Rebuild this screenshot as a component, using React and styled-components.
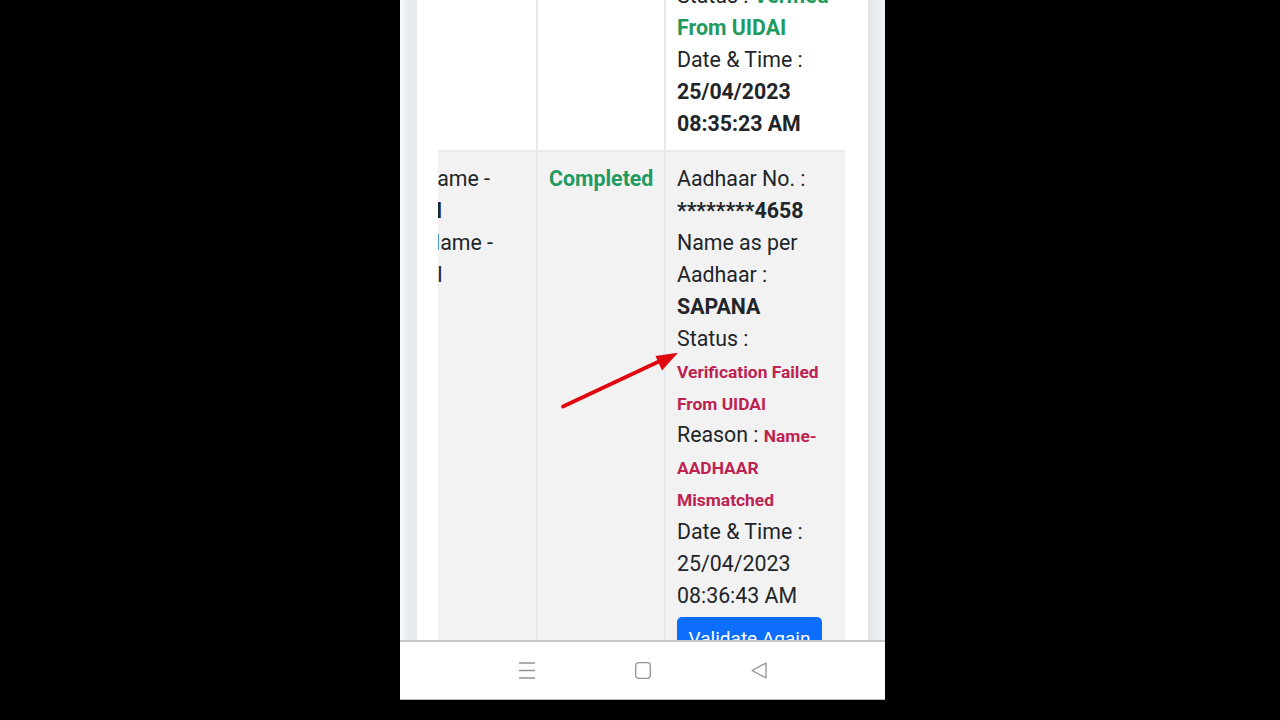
import React from "react";
import styled, { createGlobalStyle } from "styled-components";

const Global = createGlobalStyle`
  html, body { margin: 0; padding: 0; background: #000; }
  body { font-family: Roboto, "Liberation Sans", sans-serif; }
`;

const Page = styled.div`
  width: 1280px;
  height: 720px;
  background: #000;
  display: flex;
  justify-content: center;
  align-items: flex-start;
  overflow: hidden;
`;

const Phone = styled.div`
  position: relative;
  width: 485px;
  height: 700px;
  margin-left: 5px;
  display: flex;
  flex-direction: column;
  background: #fff;
`;

const Viewport = styled.div`
  height: 640px;
  overflow: hidden;
  padding: 0 17px;
  background: linear-gradient(90deg, #f9fafb 0, #e8ecef 7px, #e6eaed 17px, #dfe3e6 468px, #e9edef 476px, #f0f3f5 485px);
`;

const Card = styled.div`
  height: 640px;
  background: #fff;
  padding: 0 23px 0 21px;
`;

const Scroller = styled.div`
  height: 640px;
  overflow: hidden;
`;

const Table = styled.table`
  border-collapse: collapse;
  table-layout: fixed;
  width: 507px;
  margin: -32px 0 0 -100px;
  color: #212529;
  font-size: 21.33px;
  line-height: 32px;
`;

const Col = styled.col`
  width: ${(p) => p.$w}px;
`;

const Row = styled.tr`
  background: ${(p) => (p.$striped ? "#f2f2f2" : "#fff")};
`;

const Cell = styled.td`
  vertical-align: top;
  padding: ${(p) => (p.$first ? "12px 11px 10px" : "11px")};
  border: 2px solid #e7e9eb;
  border-left-width: 0;
  border-top-width: 0;
  &:last-child { border-right-width: 1px; }
`;

const Clipped = styled.div`
  white-space: nowrap;
  margin-left: ${(p) => p.$shift}px;
  font-weight: ${(p) => (p.$bold ? 700 : 400)};
`;

const Strong = styled.strong`
  font-weight: 700;
`;

const Good = styled.span`
  font-weight: 700;
  color: #1f9a60;
`;

const Bad = styled.span`
  font-weight: 700;
  font-size: 17.4px;
  line-height: 1;
  color: #bd2350;
`;

const DateBlock = styled.div`
  margin-top: 1px;
`;

const Button = styled.button`
  display: block;
  width: 145px;
  height: 44px;
  margin-top: 5px;
  padding: 0;
  border: 0;
  border-radius: 5px;
  background: #0d6efd;
  color: #fff;
  font: 400 19px/36px Roboto, sans-serif;
`;

const Arrow = styled.svg`
  position: absolute;
  left: 150px;
  top: 340px;
`;

const NavBar = styled.div`
  height: 60px;
  box-sizing: border-box;
  border-top: 2px solid #c9c9c9;
  border-bottom: 1px solid #bdbdbd;
  background: #fff;
  display: flex;
  justify-content: center;
  align-items: center;
  gap: 100px;
`;

const NavIcon = styled.svg`
  display: block;
`;

export default function App() {
  return (
    <Page>
      <Global />
      <Phone>
        <Viewport>
          <Card>
            <Scroller>
              <Table>
                <colgroup>
                  <Col $w={199} />
                  <Col $w={128} />
                  <Col $w={180} />
                </colgroup>
                <tbody>
                  <Row>
                    <Cell $first />
                    <Cell $first />
                    <Cell $first>
                      Status : <Good>Verified From UIDAI</Good>
                      <br />
                      Date &amp; Time :<br />
                      <Strong>25/04/2023 08:35:23 AM</Strong>
                    </Cell>
                  </Row>
                  <Row $striped>
                    <Cell>
                      <Clipped $shift={73}>Name -</Clipped>
                      <Clipped $shift={87} $bold>I</Clipped>
                      <Clipped $shift={76}>Name -</Clipped>
                      <Clipped $shift={88}>I</Clipped>
                    </Cell>
                    <Cell>
                      <Good>Completed</Good>
                    </Cell>
                    <Cell>
                      Aadhaar No. :<br />
                      <Strong>********4658</Strong>
                      <br />
                      Name as per Aadhaar : <Strong>SAPANA</Strong>
                      <br />
                      Status :<br />
                      <Bad>Verification Failed From UIDAI</Bad>
                      <br />
                      Reason : <Bad>Name- AADHAAR Mismatched</Bad>
                      <DateBlock>Date &amp; Time : 25/04/2023 08:36:43 AM</DateBlock>
                      <Button>Validate Again</Button>
                    </Cell>
                  </Row>
                </tbody>
              </Table>
            </Scroller>
          </Card>
        </Viewport>
        <NavBar>
          <NavIcon width="16" height="17" viewBox="0 0 16 17" fill="none" stroke="#929292" strokeWidth="1.3">
            <path d="M0 1h16M0 8.5h16M0 16h16" />
          </NavIcon>
          <NavIcon width="16" height="17" viewBox="0 0 16 17" fill="none" stroke="#929292" strokeWidth="1.3">
            <rect x="0.7" y="0.7" width="14.6" height="15.6" rx="3" />
          </NavIcon>
          <NavIcon width="16" height="17" viewBox="0 0 16 17" fill="none" stroke="#929292" strokeWidth="1.3" strokeLinejoin="round">
            <path d="M15 1v15L1 8.5z" />
          </NavIcon>
        </NavBar>
        <Arrow width="140" height="80" viewBox="0 0 140 80">
          <path d="M13 66.5L110 21" stroke="#e0070f" strokeWidth="3.8" strokeLinecap="round" />
          <path d="M128 12.7L105.5 16L112 30.5z" fill="#e0070f" />
        </Arrow>
      </Phone>
    </Page>
  );
}
